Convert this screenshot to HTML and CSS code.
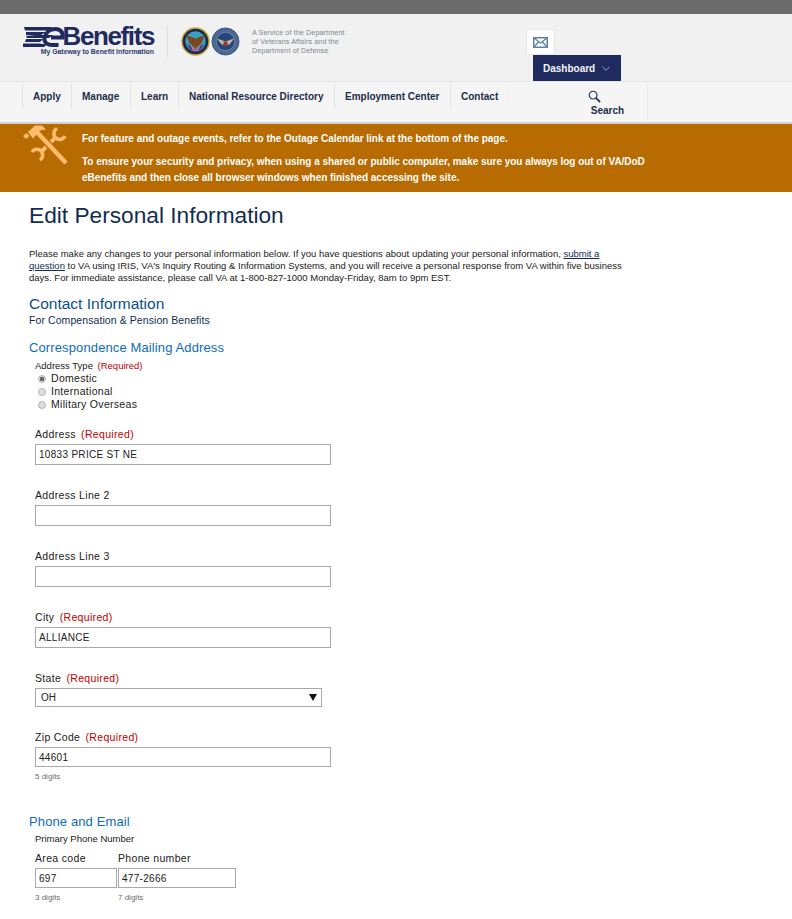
FILE: index.html
```html
<!DOCTYPE html>
<html lang="en">
<head>
<meta charset="utf-8">
<title>Edit Personal Information</title>
<link rel="stylesheet" href="styles.css">
</head>
<body>
<div class="topbar"></div>
<header class="masthead">
  <div class="brand">
    <div class="logo">
      <div class="logo-top">
        <svg class="logo-mark" viewBox="0 0 43 20" width="43" height="20"><path fill="#1f2a5f" d="M1 0h28l-3 3.500H2zM3 5h20l-5 3h12l-4 3H4l-1-2 9-1H3zM3 12h17l-3 3H2zM0 16.500h16l8 1-3 2.500H0z"/><path fill="none" stroke="#1f2a5f" stroke-width="4" d="M28 10.500h11.500c1-5-2-8.500-7-8.500-6 0-10 4-11 9-.8 4.500 3 7 8 7h6"/></svg>
        <span class="logo-name">Benefits</span>
      </div>
      <span class="logo-tag">My Gateway to Benefit Information</span>
    </div>
    <div class="seals">
      <svg viewBox="0 0 30 30" width="29" height="29"><circle cx="15" cy="15" r="14" fill="#1b2a4a" stroke="#c7a93a" stroke-width="1.500"/><circle cx="15" cy="15" r="10.500" fill="#3aa0c8"/><path fill="#5c3a78" d="M6 17l9 6 9-6-3 6-6 3-6-3z"/><path fill="#e0708f" d="M10 19l5 5 5-5-2 5-3 1-3-1z"/><path fill="#7a4a1e" d="M5 8l10 4 10-4-4 9-6 5-6-5z"/></svg>
      <svg viewBox="0 0 30 30" width="29" height="29"><circle cx="15" cy="15" r="14" fill="#4a6a94" stroke="#3a5680"/><circle cx="15" cy="15" r="9.500" fill="#27457a" stroke="#8aa0bc" stroke-width=".6"/><path fill="#c9b98f" d="M6 12l9 3 9-3-5 6h-8z"/><path fill="#8a3d3d" d="M13 15h4v5h-4z"/></svg>
    </div>
    <p class="service">A Service of the Department<br>of Veterans Affairs and the<br>Department of Defense</p>
  </div>
  <div class="account">
    <a class="mail" href="#" aria-label="Messages"><svg viewBox="0 0 15 11" width="15" height="11"><rect x=".75" y=".75" width="13.500" height="9.500" fill="#fff" stroke="#5f80a3" stroke-width="1.500"/><path d="M1 1l6.500 5L14 1M1 10l4.500-5M14 10L9.500 5" fill="none" stroke="#5f80a3" stroke-width="1.300"/></svg></a>
    <a class="dashboard" href="#">Dashboard <svg viewBox="0 0 9 5" width="8" height="5"><path d="M.5.500l4 4 4-4" fill="none" stroke="#aab3d0"/></svg></a>
  </div>
</header>
<nav class="nav">
  <ul class="nav-list">
    <li class="w-apply"><a href="#">Apply</a></li>
    <li class="w-manage"><a href="#">Manage</a></li>
    <li class="w-learn"><a href="#">Learn</a></li>
    <li class="w-nrd"><a href="#">National Resource Directory</a></li>
    <li class="w-emp"><a href="#">Employment Center</a></li>
    <li class="w-contact"><a href="#">Contact</a></li>
  </ul>
  <a class="search" href="#"><svg viewBox="0 0 14 14" width="13" height="13"><circle cx="5.500" cy="5.500" r="4.200" fill="none" stroke="#24304f" stroke-width="1.200"/><path d="M8.500 8.500l4.500 4.500" stroke="#24304f" stroke-width="2"/></svg><span>Search</span></a>
</nav>
<section class="notice">
  <svg class="tools" viewBox="0 0 46 42" width="46" height="42"><g fill="none" stroke="#fcbc6c"><path stroke-width="4.500" d="M13 5l31 33"/><path stroke-width="4" d="M33 13l-4 4M24 22l-5 5"/><path stroke-width="3.500" d="M35 3.500A5.800 5.800 0 1 0 43 11M10 27A5.800 5.800 0 1 1 18 35"/></g><path fill="#fcbc6c" d="M1 11l3.500-3 3 3-3.500 3zM6 7l7-6.500h7l4 4-6 1-7 8z"/></svg>
  <div class="notice-text">
    <p>For feature and outage events, refer to the Outage Calendar link at the bottom of the page.</p>
    <p>To ensure your security and privacy, when using a shared or public computer, make sure you always log out of VA/DoD eBenefits and then close all browser windows when finished accessing the site.</p>
  </div>
</section>
<main class="content">
  <h1>Edit Personal Information</h1>
  <p class="intro">Please make any changes to your personal information below. If you have questions about updating your personal information, <a href="#">submit a question</a> to VA using IRIS, VA's Inquiry Routing &amp; Information Systems, and you will receive a personal response from VA within five business days. For immediate assistance, please call VA at 1-800-827-1000 Monday-Friday, 8am to 9pm EST.</p>
  <h2>Contact Information</h2>
  <p class="sub">For Compensation &amp; Pension Benefits</p>
  <h3 class="h-mail">Correspondence Mailing Address</h3>
  <form class="form">
    <div class="radio-group">
      <div class="small-label">Address Type <span class="req">(Required)</span></div>
      <label class="radio"><input type="radio" name="t" checked>Domestic</label>
      <label class="radio"><input type="radio" name="t">International</label>
      <label class="radio"><input type="radio" name="t">Military Overseas</label>
    </div>
    <div class="field"><label>Address <span class="req">(Required)</span></label><input class="text" type="text" value="10833 PRICE ST NE"></div>
    <div class="field"><label>Address Line 2</label><input class="text" type="text"></div>
    <div class="field"><label>Address Line 3</label><input class="text" type="text"></div>
    <div class="field"><label>City <span class="req">(Required)</span></label><input class="text" type="text" value="ALLIANCE"></div>
    <div class="field"><label>State <span class="req">(Required)</span></label><div class="select"><span>OH</span><svg viewBox="0 0 8 7" width="8" height="7"><path d="M0 0h8L4 7z" fill="#111"/></svg></div></div>
    <div class="field zip"><label>Zip Code <span class="req">(Required)</span></label><input class="text short" type="text" value="44601"><div class="hint">5 digits</div></div>
  </form>
  <h3 class="h-phone">Phone and Email</h3>
  <div class="form">
    <div class="small-label">Primary Phone Number</div>
    <div class="phone-row">
      <div class="area"><label>Area code</label><input class="text short" type="text" value="697"><div class="hint">3 digits</div></div>
      <div class="number"><label>Phone number</label><input class="text short" type="text" value="477-2666"><div class="hint">7 digits</div></div>
    </div>
  </div>
</main>
</body>
</html>
```
FILE: styles.css
```css
* { box-sizing: border-box; }
html, body { margin: 0; padding: 0; }
body { font-family: "Liberation Sans", Arial, sans-serif; color: #212121; background: #fff; overflow: hidden; height: 919px; }
p { margin: 0; }
.topbar { height: 14px; background: #6b6b6b; }
.masthead { height: 67px; background: #f1f1f1; display: flex; position: relative; padding-left: 23px; }
.brand { display: flex; align-items: flex-start; padding-top: 12px; }
.logo { display: flex; flex-direction: column; align-items: flex-end; width: 145px; height: 31px; padding-right: 13px; border-right: 1px solid #e0e0e0; }
.logo-top { display: flex; align-items: flex-start; height: 21px; }
.logo-mark { margin-top: 1px; margin-right: -3px; }
.logo-name { font-size: 26px; line-height: 20px; font-weight: 700; color: #1f2a5f; letter-spacing: -1.4px; }
.logo-tag { font-size: 6.900px; line-height: 9px; font-weight: 700; color: #2b3a6c; white-space: nowrap; }
.seals { display: flex; gap: 1px; margin-left: 13px; padding-top: 1px; }
.service { font-size: 7.200px; line-height: 9px; color: #7f8890; margin-left: 12px; margin-top: 2px; letter-spacing: .1px; }
.account { position: absolute; left: 526px; top: 15px; width: 95px; height: 52px; }
.mail { display: flex; align-items: center; justify-content: center; width: 29px; height: 26px; background: #fff; border: 1px solid #e6e6e6; }
.dashboard { position: absolute; left: 7px; top: 26px; width: 88px; height: 26px; background: #1f2a5f; color: #f2f4fa; font-size: 10px; font-weight: 700; text-decoration: none; display: flex; align-items: center; gap: 7px; padding-left: 10px; }
.nav { height: 43px; background: #f5f5f5; border-top: 1px solid #e6e6e6; border-bottom: 2px solid #d2d2d2; display: flex; padding-left: 22px; padding-top: 1px; }
.nav-list { display: flex; list-style: none; margin: 0; padding: 0; height: 26px; }
.nav-list li { border-left: 1px solid #e2e2e2; height: 26px; display: flex; align-items: center; padding-left: 10px; }
.nav-list li:last-child { border-right: 1px solid #f0f0f0; }
.nav-list a, .search { font-size: 10px; font-weight: 700; color: #1c2d4a; text-decoration: none; white-space: nowrap; }
.w-apply { width: 49px; }
.w-manage { width: 59px; }
.w-learn { width: 48px; }
.w-nrd { width: 156px; }
.w-emp { width: 116px; }
.w-contact { width: 58px; }
.search { width: 140px; border-right: 1px solid #ececec; height: 40px; display: flex; flex-direction: column; align-items: center; padding-top: 7px; padding-left: 60px; }
.search svg { margin-right: 26px; }
.search span { line-height: 14px; margin-top: 1px; }
.notice { height: 68px; background: #b86b00; color: #fff; display: flex; padding: 0 0 0 22px; }
.tools { flex: none; margin-top: 1px; }
.notice-text { width: 568px; margin-left: 14px; padding-top: 7px; font-size: 10px; font-weight: 700; line-height: 16px; letter-spacing: -.03px; }
.notice-text p + p { margin-top: 7px; }
.content { padding-left: 29px; width: 625px; }
h1 { font-size: 22.700px; font-weight: 400; color: #112e51; margin: 9px 0 0; line-height: 29px; }
.intro { font-size: 9.500px; line-height: 12px; color: #212121; margin-top: 18px; }
.intro a { color: #112e51; }
h2 { font-size: 15.500px; font-weight: 400; color: #0b4f87; margin: 10px 0 0; line-height: 19px; }
.sub { font-size: 10.500px; line-height: 13px; color: #112e51; margin-top: 1px; letter-spacing: .08px; }
h3 { font-size: 13px; font-weight: 400; color: #0f6cb6; margin: 0; line-height: 16px; letter-spacing: .12px; }
.h-mail { margin-top: 13px; }
.form { padding-left: 6px; }
.small-label { font-size: 9.500px; line-height: 12px; color: #212121; }
.req { color: #c00000; margin-left: 2px; }
.radio-group { margin-top: 4px; }
.radio { display: flex; align-items: center; font-size: 10.500px; line-height: 13px; color: #212121; letter-spacing: .3px; }
.radio input { appearance: none; width: 8px; height: 8px; margin: 0 5px 0 3px; border: 1px solid #b4b4b4; border-radius: 50%; background: #dedede; }
.radio input:checked { background: radial-gradient(circle, #666 0 2px, #dedede 2.500px); }
.field { height: 61px; }
.radio-group + .field { margin-top: 17px; }
.field label, .area label, .number label { display: block; font-size: 10.500px; line-height: 13px; color: #212121; letter-spacing: .33px; margin-bottom: 3px; }
.text { display: block; width: 296px; height: 21px; border: 1px solid #a9a9a9; padding: 0 3px; font: 10px "Liberation Sans", Arial, sans-serif; color: #212121; letter-spacing: .3px; background: #fff; border-radius: 0; outline: 0; }
.short { height: 20px; }
.select { width: 287px; height: 19px; border: 1px solid #a9a9a9; display: flex; align-items: center; justify-content: space-between; padding: 0 4px 0 5px; font-size: 10px; color: #212121; }
.zip { height: auto; margin-top: -2px; }
.hint { font-size: 8px; line-height: 10px; color: #6b6b6b; margin-top: 5px; }
.h-phone { margin-top: 32px; }
.h-phone + .form .small-label { margin-top: 3px; }
.phone-row { display: flex; gap: 1px; margin-top: 7px; }
.area { width: 82px; }
.area .text { width: 82px; }
.number .text { width: 118px; }
```
